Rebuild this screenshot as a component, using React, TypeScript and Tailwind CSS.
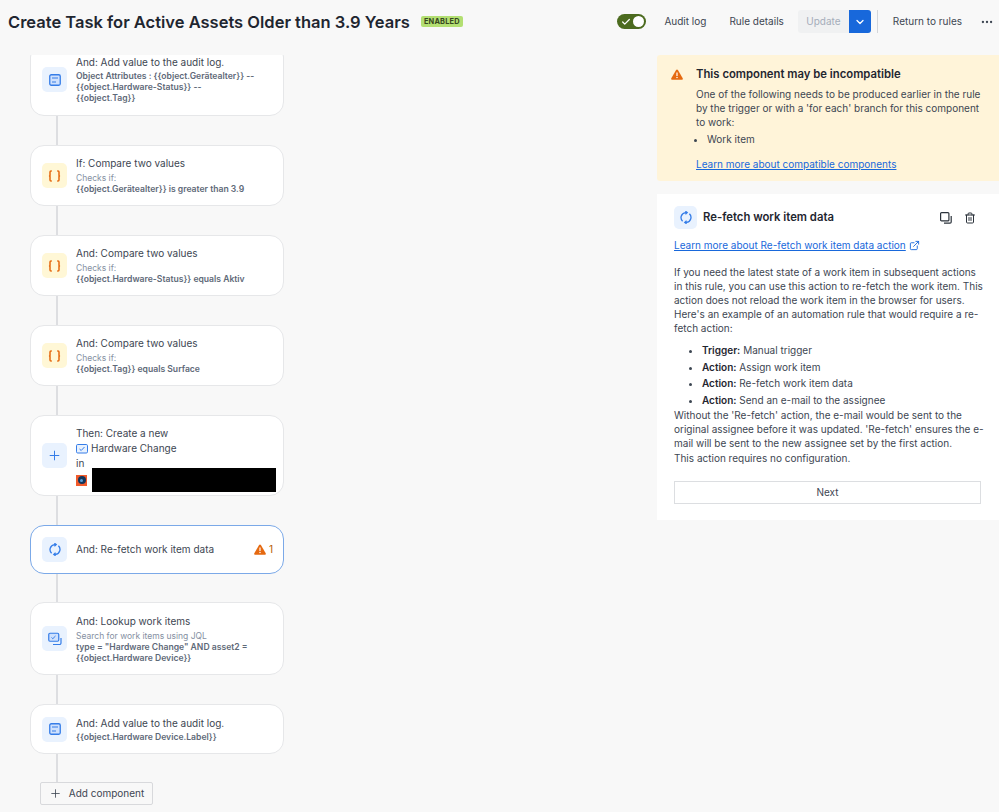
import React from "react";
import { Check, ChevronDown, Plus, Trash2, ExternalLink, MoreHorizontal } from "lucide-react";

const font = "font-['Inter','Noto_Sans',sans-serif]";

function LogIcon() {
  return (
    <svg width="12" height="12" viewBox="0 0 12 12" fill="none">
      <rect x="0.75" y="0.75" width="10.5" height="10.5" rx="1.5" fill="#cfe1fd" stroke="#357de8" strokeWidth="1.3" />
      <path d="M3 4h6M3 8h4" stroke="#357de8" strokeWidth="1.2" />
    </svg>
  );
}
function BracesIcon() {
  return (
    <svg width="13" height="12" viewBox="0 0 13 12" fill="none" stroke="#e56910" strokeWidth="1.5">
      <path d="M3.8 1H3a1 1 0 0 0-1 1v2.6a1 1 0 0 1-1 1.4 1 1 0 0 1 1 1.4V10a1 1 0 0 0 1 1h.8" />
      <path d="M9.2 1H10a1 1 0 0 1 1 1v2.6a1 1 0 0 0 1 1.4 1 1 0 0 0-1 1.4V10a1 1 0 0 1-1 1h-.8" />
    </svg>
  );
}
function LookupIcon() {
  return (
    <svg width="14" height="14" viewBox="0 0 14 14" fill="none">
      <rect x="0.75" y="1.25" width="10" height="8" rx="1.2" fill="#cfe1fd" stroke="#357de8" strokeWidth="1.2" />
      <path d="M3.5 5.5l1.3 1.2L7.5 4" stroke="#357de8" strokeWidth="1" />
      <path d="M13 6v5a1.5 1.5 0 0 1-1.5 1.5H5" stroke="#357de8" strokeWidth="1.2" />
    </svg>
  );
}
function RefetchIcon() {
  return (
    <svg width="12" height="13" viewBox="0 0 12 13" fill="none" stroke="#357de8" strokeWidth="1.3">
      <path d="M2.6 10.2A5 5 0 0 1 5.5 1.6H7" />
      <path d="M5.4 0.2L7.2 1.6L5.4 3.2" />
      <path d="M9.4 2.8A5 5 0 0 1 6.5 11.4H5" />
      <path d="M6.6 9.8L4.8 11.4L6.6 12.8" />
    </svg>
  );
}
function WarnIcon({ className }: { className?: string }) {
  return (
    <svg width="12" height="11" viewBox="0 0 12 11" className={className}>
      <path d="M6 0.6c.4 0 .7.2.9.5l4.8 8.2c.4.7-.1 1.5-.9 1.5H1.2c-.8 0-1.3-.8-.9-1.5L5.1 1.1c.2-.3.5-.5.9-.5z" fill="#e56910" />
      <path d="M6 3.4v3.6" stroke="#fff" strokeWidth="1.2" />
      <circle cx="6" cy="8.6" r="0.75" fill="#fff" />
    </svg>
  );
}
function CopyIcon() {
  return (
    <svg width="12" height="12" viewBox="0 0 12 12" fill="none" stroke="#2b323b" strokeWidth="1.2">
      <rect x="0.6" y="0.6" width="8.3" height="8.3" rx="1" />
      <path d="M11.2 4v6a1.2 1.2 0 0 1-1.2 1.2H4" />
    </svg>
  );
}

function IconBox({ yellow, small, children }: { yellow?: boolean; small?: boolean; children: React.ReactNode }) {
  return (
    <div className={`flex shrink-0 items-center justify-center rounded-[5px] ${small ? "h-[23px] w-[23px]" : "h-[25px] w-[25px]"} ${yellow ? "bg-[#fff7d6]" : "bg-[#e9f2fe]"}`}>
      {children}
    </div>
  );
}

function Card({ icon, yellow, title, sub, bold, h, children, selected }: {
  icon: React.ReactNode; yellow?: boolean; title?: string; sub?: string; bold?: React.ReactNode; h: string; children?: React.ReactNode; selected?: boolean;
}) {
  return (
    <div className={`flex w-[254px] shrink-0 items-center rounded-[14px] border bg-white pl-[11px] pr-[7px] ${h} ${selected ? "border-[#7ba9e8]" : "border-[#e6e7e9]"}`}>
      <IconBox yellow={yellow}>{icon}</IconBox>
      <div className="ml-[9px] min-w-0 flex-1">
        {title && <div className="text-[10px] leading-[15px] text-[#3d4652]">{title}</div>}
        {sub && <div className="mt-[2px] text-[8.5px] leading-[11px] text-[#8590a2]">{sub}</div>}
        {bold && <div className={`text-[8.6px] font-semibold leading-[11px] text-[#5e6978] ${sub ? "" : "mt-[1px]"}`}>{bold}</div>}
        {children}
      </div>
    </div>
  );
}

function Line({ h }: { h: string }) {
  return <div className={`ml-[26px] w-[2px] shrink-0 bg-[#dddee1] ${h}`} />;
}

export default function App() {
  return (
    <div className={`${font} flex h-[812px] w-[999px] flex-col overflow-hidden bg-[#f8f8f8]`}>
      <header className="flex h-[55px] shrink-0 items-center pb-[22px] pl-[8px] pr-[5px] pt-[10px]">
        <h1 className="whitespace-nowrap text-[16.5px] font-semibold leading-[24px] text-[#1f2630]">Create Task for Active Assets Older than 3.9 Years</h1>
        <span className="ml-[11px] rounded-[2px] bg-[#b3df72] px-[3px] text-[7.4px] font-bold leading-[11px] tracking-[0.2px] text-[#37471f]">ENABLED</span>
        <div className="ml-auto flex items-center">
          <div className="flex h-[15px] w-[29px] items-center justify-between rounded-full bg-[#4c6b1f] pl-[4px] pr-[2px]">
            <Check size={10} strokeWidth={3} className="text-white" />
            <span className="h-[11px] w-[11px] rounded-full bg-white" />
          </div>
          <span className="ml-[18px] text-[10px] text-[#3d4652]">Audit log</span>
          <span className="ml-[23px] text-[10px] text-[#3d4652]">Rule details</span>
          <div className="ml-[14px] flex h-[23px] items-center">
            <div className="flex h-full w-[51px] items-center justify-center rounded-l-[3px] bg-[#f0f1f2] text-[10px] text-[#a5adba]">Update</div>
            <div className="flex h-full w-[22px] items-center justify-center rounded-r-[3px] bg-[#1868db]">
              <ChevronDown size={12} strokeWidth={2.5} className="text-white" />
            </div>
          </div>
          <div className="ml-[6px] h-[23px] w-[1px] bg-[#d4d6da]" />
          <span className="ml-[15px] text-[10px] text-[#3d4652]">Return to rules</span>
          <MoreHorizontal size={14} className="ml-[18px] text-[#3d4652]" />
        </div>
      </header>
      <div className="flex min-h-0 flex-1">
        <section className="w-[657px] shrink-0 overflow-hidden pl-[30px]">
          <div className="-mt-[12px] flex flex-col">
            <Card h="h-[73px]" icon={<LogIcon />} title="And: Add value to the audit log." bold={<>Object Attributes : {"{{object.Gerätealter}}"} --<br />{"{{object.Hardware-Status}}"} --<br />{"{{object.Tag}}"}</>} />
            <Line h="h-[29px]" />
            <Card h="h-[61px]" yellow icon={<BracesIcon />} title="If: Compare two values" sub="Checks if:" bold="{{object.Gerätealter}} is greater than 3.9" />
            <Line h="h-[29px]" />
            <Card h="h-[61px]" yellow icon={<BracesIcon />} title="And: Compare two values" sub="Checks if:" bold="{{object.Hardware-Status}} equals Aktiv" />
            <Line h="h-[29px]" />
            <Card h="h-[61px]" yellow icon={<BracesIcon />} title="And: Compare two values" sub="Checks if:" bold="{{object.Tag}} equals Surface" />
            <Line h="h-[29px]" />
            <Card h="h-[81px]" icon={<Plus size={15} className="text-[#357de8]" strokeWidth={1.6} />}>
              <div className="mt-[7px]">
                <div className="text-[10px] leading-[15px] text-[#3d4652]">Then: Create a new</div>
                <div className="flex items-center text-[10px] leading-[15px] text-[#3d4652]">
                  <svg width="12" height="10" viewBox="0 0 12 10" fill="none" className="mr-[3px]">
                    <rect x="0.5" y="0.5" width="11" height="8.5" rx="1.2" fill="#e9f2fe" stroke="#357de8" />
                    <path d="M3.5 5l1.7 1.5L8.5 3" stroke="#357de8" />
                  </svg>
                  Hardware Change
                </div>
                <div className="text-[10px] leading-[15px] text-[#3d4652]">in</div>
                <div className="-mt-[3px] flex items-center">
                  <div className="flex h-[11px] w-[11px] items-center justify-center bg-[#f15a2b]">
                    <div className="flex h-[8px] w-[8px] items-center justify-center rounded-full bg-[#12355b]">
                      <div className="h-[3px] w-[3px] rounded-full bg-[#5aa0d8]" />
                    </div>
                  </div>
                  <div className="ml-[5px] h-[24px] w-[184px] bg-black" />
                </div>
              </div>
            </Card>
            <Line h="h-[29px]" />
            <Card h="h-[49px]" selected icon={<RefetchIcon />}>
              <div className="flex items-center text-[10px] leading-[15px] text-[#3d4652]">
                And: Re-fetch work item data
                <WarnIcon className="ml-auto" />
                <span className="ml-[3px] mr-[3px] text-[#b65c02]">1</span>
              </div>
            </Card>
            <Line h="h-[28px]" />
            <Card h="h-[73px]" icon={<LookupIcon />} title="And: Lookup work items" sub="Search for work items using JQL" bold={'type = "Hardware Change" AND asset2 = {{object.Hardware Device}}'} />
            <Line h="h-[29px]" />
            <Card h="h-[50px]" icon={<LogIcon />} title="And: Add value to the audit log." bold="{{object.Hardware Device.Label}}" />
            <Line h="h-[28px]" />
            <div className="ml-[10px] flex h-[23px] w-[113px] items-center justify-center gap-[7px] rounded-[2px] border border-[#d8d9dc] text-[10px] text-[#3d4652]">
              <Plus size={13} strokeWidth={1.5} />
              Add component
            </div>
          </div>
        </section>
        <aside className="flex w-[342px] shrink-0 flex-col">
          <div className="flex h-[126px] shrink-0 rounded-l-[3px] bg-[#fff4d9] pl-[14px] pr-[18px] pt-[11.5px]">
            <WarnIcon className="mt-[2px] shrink-0" />
            <div className="ml-[13px] min-w-0 flex-1">
              <div className="text-[11.3px] font-semibold leading-[15px] text-[#1f2630]">This component may be incompatible</div>
              <p className="mt-[5.5px] text-[10px] leading-[14px] text-[#3d4652]">One of the following needs to be produced earlier in the rule by the trigger or with a 'for each' branch for this component to work:</p>
              <ul className="mt-[2.5px] list-disc pl-[11px] text-[10px] leading-[15px] text-[#3d4652]"><li>Work item</li></ul>
              <a className="mt-[10px] block text-[10px] leading-[15px] text-[#1868db] underline">Learn more about compatible components</a>
            </div>
          </div>
          <div className="mt-[13px] flex h-[326px] shrink-0 flex-col bg-white pl-[17px] pr-[18px] pt-[12px]">
            <div className="flex items-center">
              <IconBox small><RefetchIcon /></IconBox>
              <span className="ml-[6px] text-[11.3px] font-semibold text-[#1f2630]">Re-fetch work item data</span>
              <span className="ml-auto"><CopyIcon /></span>
              <Trash2 size={12} className="ml-[12px] mr-[5px] text-[#2b323b]" />
            </div>
            <div className="mt-[9px] flex items-center text-[10px] leading-[15px] text-[#1868db]">
              <a className="underline">Learn more about Re-fetch work item data action</a>
              <ExternalLink size={11} className="ml-[3px]" />
            </div>
            <p className="-mr-[2px] mt-[12px] text-[10px] leading-[14px] text-[#3d4652]">If you need the latest state of a work item in subsequent actions in this rule, you can use this action to re-fetch the work item. This action does not reload the work item in the browser for users. Here's an example of an automation rule that would require a re-fetch action:</p>
            <ul className="mt-[7px] list-disc pl-[28px] text-[10px] leading-[16.7px] text-[#3d4652]">
              <li><b className="font-semibold text-[#1f2630]">Trigger:</b> Manual trigger</li>
              <li><b className="font-semibold text-[#1f2630]">Action:</b> Assign work item</li>
              <li><b className="font-semibold text-[#1f2630]">Action:</b> Re-fetch work item data</li>
              <li><b className="font-semibold text-[#1f2630]">Action:</b> Send an e-mail to the assignee</li>
            </ul>
            <p className="-mr-[5px] -mt-[1px] text-[10px] leading-[14.3px] text-[#3d4652]">Without the 'Re-fetch' action, the e-mail would be sent to the original assignee before it was updated. 'Re-fetch' ensures the e-mail will be sent to the new assignee set by the first action.<br />This action requires no configuration.</p>
            <div className="mt-[16px] flex h-[23px] items-center justify-center border border-[#dcdee1] text-[10px] text-[#3d4652]">Next</div>
          </div>
        </aside>
      </div>
    </div>
  );
}
